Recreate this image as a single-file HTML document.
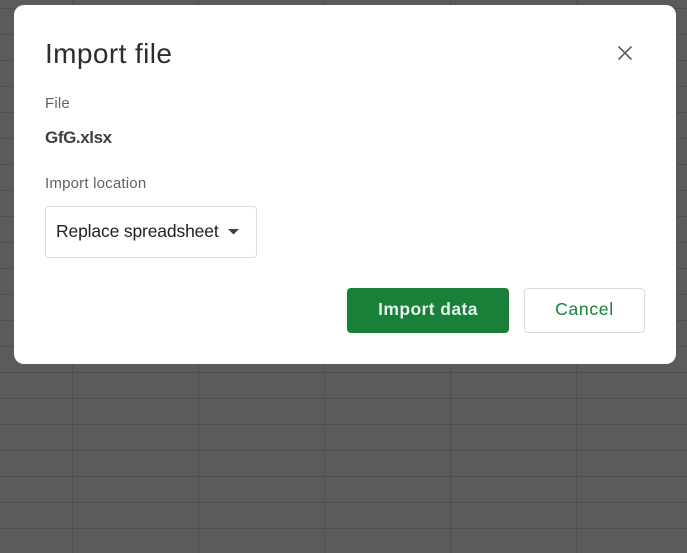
<!DOCTYPE html>
<html>
<head>
<meta charset="utf-8">
<style>
html,body{margin:0;padding:0;}
body{width:687px;height:553px;overflow:hidden;position:relative;background:#5a5b5a;font-family:"Liberation Sans",sans-serif;}
.h{position:absolute;left:0;width:687px;height:1px;background:#4e4f4e;}
.v{position:absolute;top:0;height:553px;width:1px;background:#4e4f4e;}
.dlg{position:absolute;left:14px;top:5px;width:662px;height:359px;background:#fff;border-radius:10px;}
.t{position:absolute;white-space:nowrap;line-height:1;}
.btn{position:absolute;box-sizing:border-box;border-radius:4px;}
</style>
</head>
<body>
<div class="h" style="top:8px"></div><div class="h" style="top:34px"></div><div class="h" style="top:60px"></div><div class="h" style="top:86px"></div><div class="h" style="top:112px"></div><div class="h" style="top:138px"></div><div class="h" style="top:164px"></div><div class="h" style="top:190px"></div><div class="h" style="top:216px"></div><div class="h" style="top:242px"></div><div class="h" style="top:268px"></div><div class="h" style="top:294px"></div><div class="h" style="top:320px"></div><div class="h" style="top:346px"></div><div class="h" style="top:372px"></div><div class="h" style="top:398px"></div><div class="h" style="top:424px"></div><div class="h" style="top:450px"></div><div class="h" style="top:476px"></div><div class="h" style="top:502px"></div><div class="h" style="top:528px"></div>
<div class="v" style="left:72px"></div><div class="v" style="left:198px"></div><div class="v" style="left:324px"></div><div class="v" style="left:450px"></div><div class="v" style="left:576px"></div>
<div class="dlg"></div>
<div class="t" style="left:45px;top:40px;font-size:28px;color:#2c2d30;letter-spacing:.4px">Import file</div>
<svg style="position:absolute;left:613px;top:41px" width="24" height="24" viewBox="0 0 24 24"><path d="M5.5 5.5L18.5 18.5M18.5 5.5L5.5 18.5" stroke="#5f6368" stroke-width="1.7" fill="none"/></svg>
<div class="t" style="left:45px;top:96px;font-size:15px;color:#5f6368;letter-spacing:.2px">File</div>
<div class="t" style="left:45px;top:129px;font-size:17px;font-weight:bold;color:#3c4043;letter-spacing:-.4px">GfG.xlsx</div>
<div class="t" style="left:45px;top:176px;font-size:15px;color:#5f6368;letter-spacing:.2px">Import location</div>
<div class="btn" style="left:45px;top:206px;width:212px;height:52px;border:1px solid #dadce0"></div>
<div class="t" style="left:56px;top:223px;font-size:17.5px;color:#202124;letter-spacing:-.15px">Replace spreadsheet</div>
<svg style="position:absolute;left:227px;top:228px" width="13" height="7" viewBox="0 0 13 7"><path d="M1 1H12L6.5 6.5Z" fill="#3c4043"/></svg>
<div class="btn" style="left:347px;top:288px;width:162px;height:45px;background:#188038"></div>
<div class="t" style="left:347px;width:162px;text-align:center;top:301px;font-size:17.5px;font-weight:bold;color:#e8f0ea;letter-spacing:.4px">Import data</div>
<div class="btn" style="left:524px;top:288px;width:121px;height:45px;border:1px solid #dadce0;background:#fff"></div>
<div class="t" style="left:524px;width:121px;text-align:center;top:301px;font-size:17.5px;color:#188038;letter-spacing:.7px">Cancel</div>
</body>
</html>
